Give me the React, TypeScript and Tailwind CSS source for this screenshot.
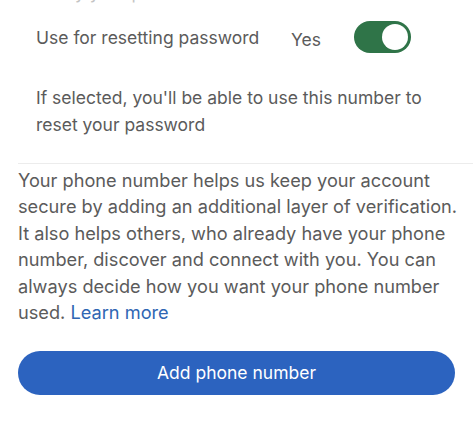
export default function App() {
  const lines = [
    "Your phone number helps us keep your account",
    "secure by adding an additional layer of verification.",
    "It also helps others, who already have your phone",
    "number, discover and connect with you. You can",
    "always decide how you want your phone number",
  ];

  return (
    <div
      className="w-[473px] h-[423px] overflow-hidden bg-white text-[#5b5b5b]"
      style={{ fontFamily: "Inter, 'Noto Sans', sans-serif" }}
    >
      {/* Cut-off heading above */}
      <div className="pl-[36px] -mt-[17px] h-[20px] text-[17.5px] leading-[20px] text-[#c4c4c4]">
        Verify your phone number
      </div>

      {/* Reset password row */}
      <div className="flex items-center pl-[36px] mt-[16px] h-[36px]">
        <span className="text-[17.5px] w-[255px] mt-[3px]">Use for resetting password</span>
        <span className="text-[17.5px] mt-[6px] w-[63px]">Yes</span>
        <div className="w-[57px] h-[32px] rounded-full bg-[#2f7448] flex items-center justify-end pr-[3px]">
          <div className="w-[26px] h-[26px] rounded-full bg-white" />
        </div>
      </div>

      <p className="pl-[36px] pr-[30px] mt-[29px] text-[17.5px] leading-[27px]">
        If selected, you'll be able to use this number to reset your password
      </p>

      <div className="ml-[18px] mt-[25px] h-px bg-[#ececec]" />

      <div className="pl-[18px] mt-[3px] text-[18.2px] leading-[26.4px] whitespace-nowrap">
        {lines.map((line) => (
          <div key={line}>{line}</div>
        ))}
        <div>
          used. <span className="text-[#2f66b3]">Learn more</span>
        </div>
      </div>

      <div className="px-[18px] mt-[26px]">
        <button className="w-[437px] h-[44px] rounded-full bg-[#2c63bf] text-white text-[17.5px]">
          Add phone number
        </button>
      </div>
    </div>
  );
}
